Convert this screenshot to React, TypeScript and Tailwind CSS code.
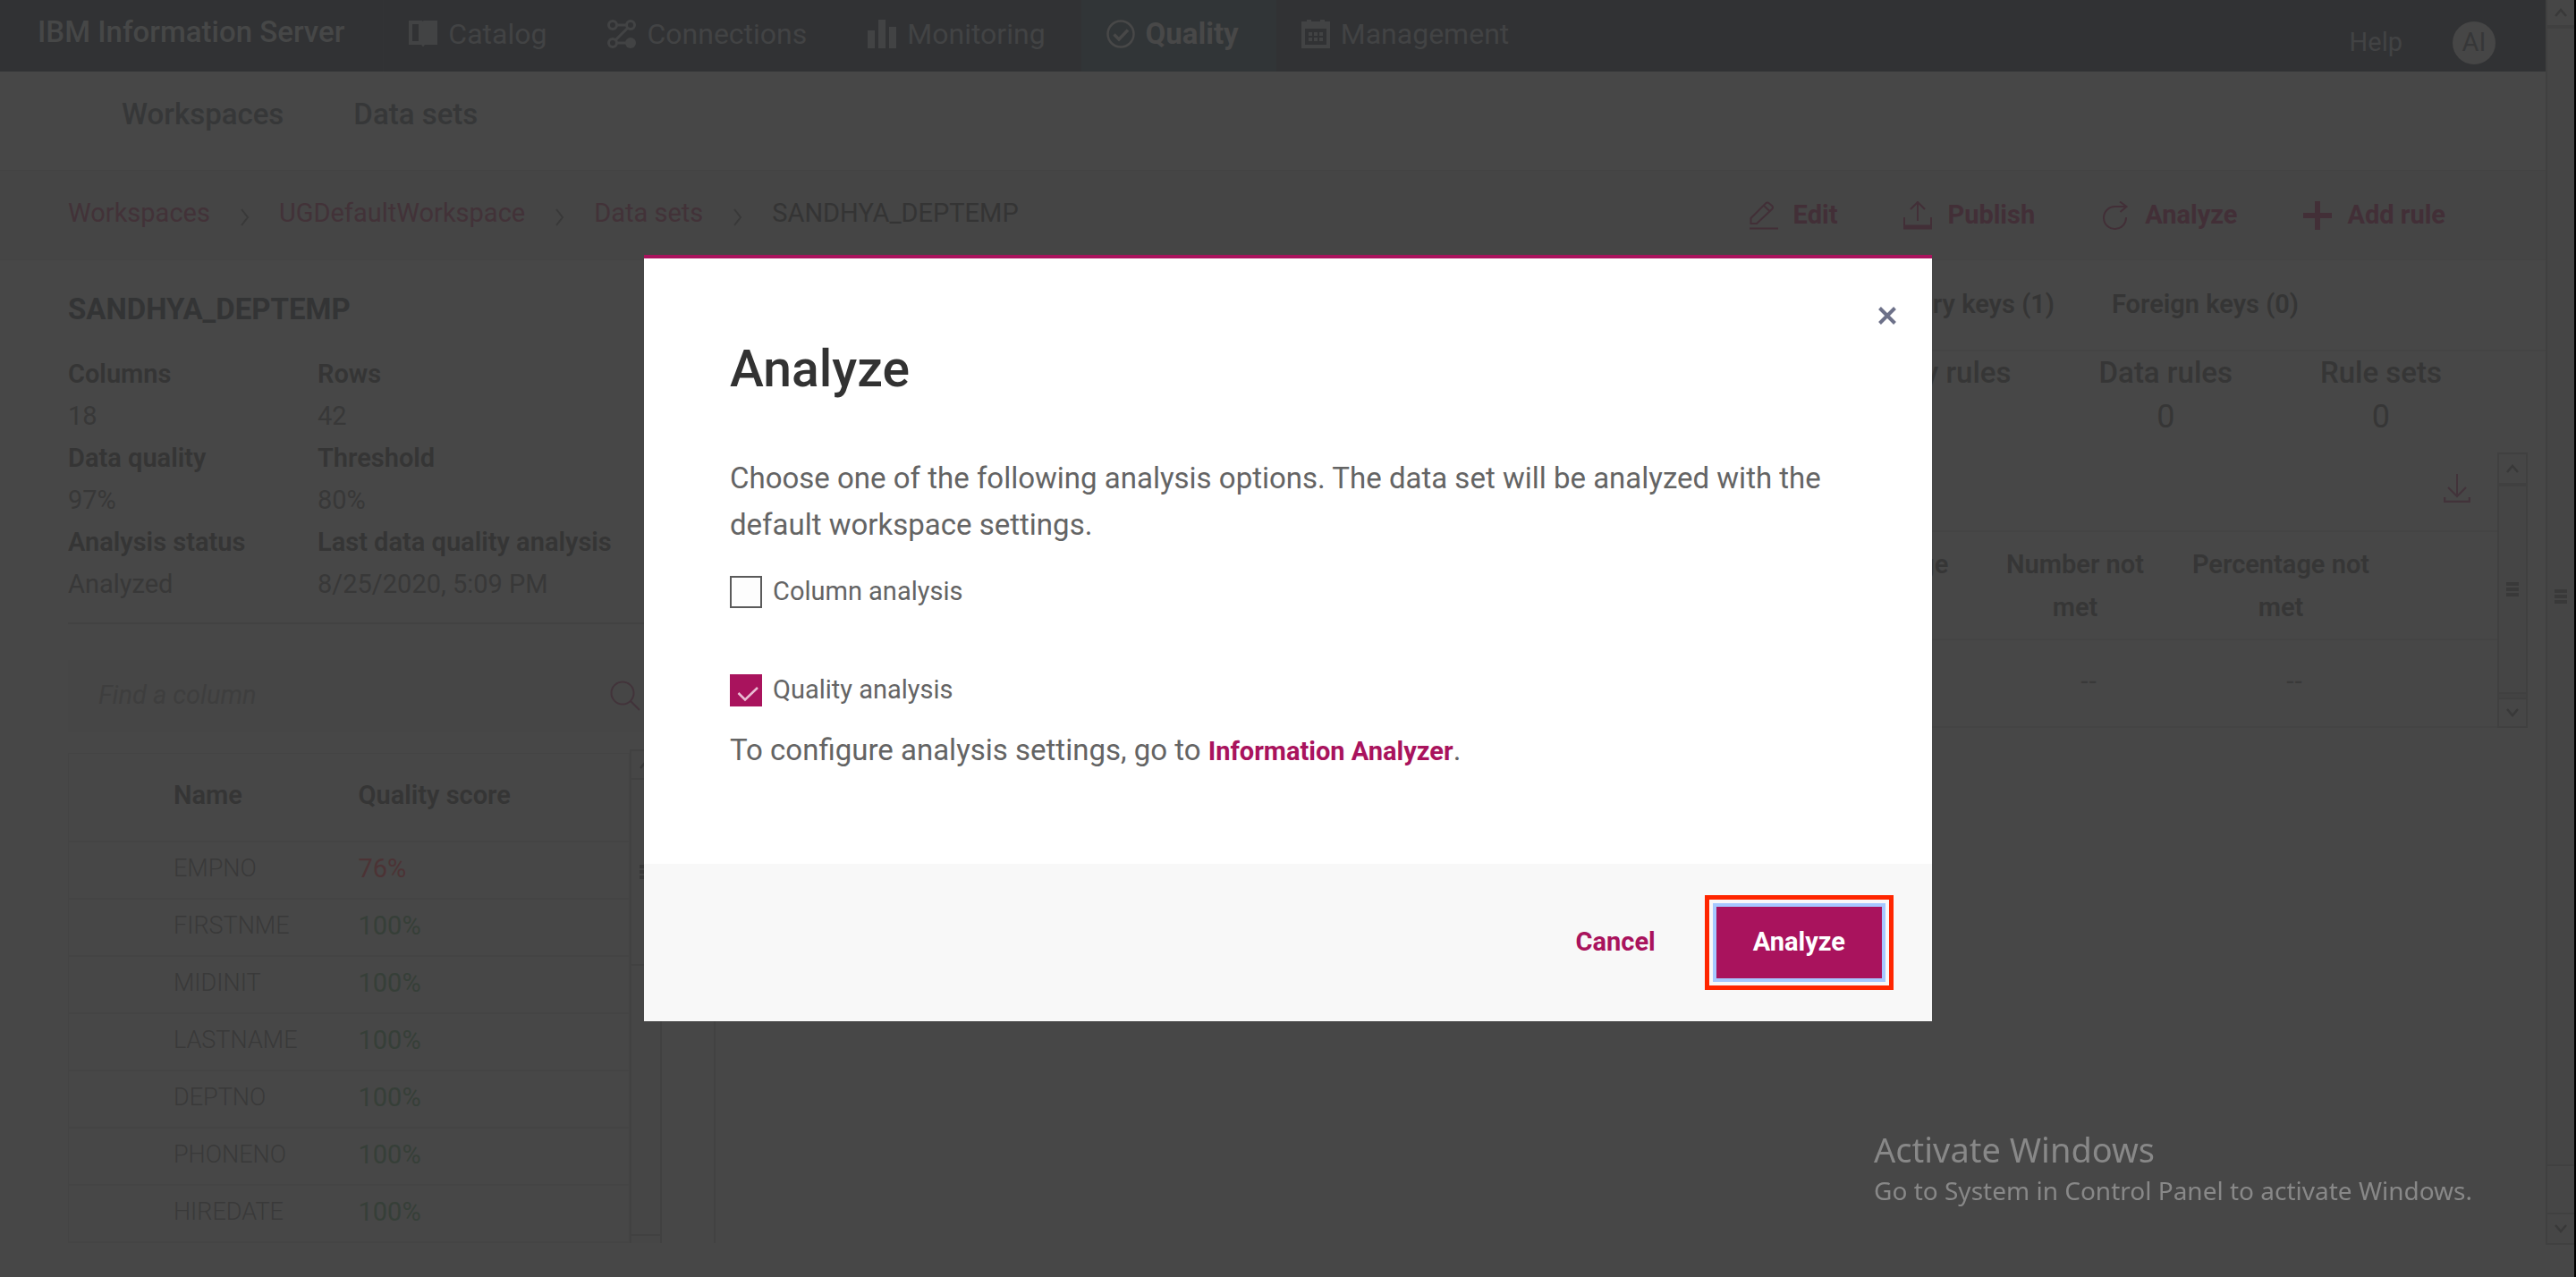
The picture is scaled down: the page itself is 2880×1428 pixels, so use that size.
import type { ReactNode } from "react";

const navItems: { label: string; icon: ReactNode; active?: boolean }[] = [
  {
    label: "Catalog",
    icon: (
      <>
        <path d="M2 3h11v23H2z" fill="none" stroke="currentColor" strokeWidth="4" />
        <path d="M14 2.500l3-1.500h15v27h-14l-2 2.500-2-2.500z" />
      </>
    ),
  },
  {
    label: "Connections",
    icon: (
      <>
        <path d="M6 6h20L6 26h18" fill="none" stroke="currentColor" strokeWidth="3" />
        <g fill="#313234" stroke="currentColor" strokeWidth="3">
          <circle cx="6" cy="6" r="4.500" />
          <circle cx="26" cy="6" r="4.500" />
          <circle cx="6" cy="26" r="4.500" />
        </g>
        <circle cx="26" cy="26" r="6" />
      </>
    ),
  },
  {
    label: "Monitoring",
    icon: <path d="M0 12h8v20H0zM12 0h8v32h-8zM24 8h8v24h-8z" />,
  },
  {
    label: "Quality",
    active: true,
    icon: (
      <g fill="none" stroke="currentColor" strokeWidth="2.500">
        <circle cx="16" cy="16" r="14.500" />
        <path d="M8.500 16.500l5.500 5.500L24 11.500" strokeWidth="3.500" />
      </g>
    ),
  },
  {
    label: "Management",
    icon: (
      <>
        <path
          fillRule="evenodd"
          d="M0 2h6V0h5v2h10V0h5v2h6v30H0zM4 10v18h24V10z"
        />
        <path d="M8 14h4v4H8zM14 14h4v4h-4zM20 14h4v4h-4zM8 20h4v4H8zM14 20h4v4h-4zM20 20h4v4h-4z" />
      </>
    ),
  },
];

const actions: { label: string; icon: ReactNode }[] = [
  {
    label: "Edit",
    icon: (
      <>
        <path d="M1.500 25v-6L18 2.500q2-2 4 0L25 5q2 2 0 4L8 25zM16 5l7 6.500" />
        <path d="M0 30.500h32" />
      </>
    ),
  },
  {
    label: "Publish",
    icon: (
      <>
        <path d="M16 1v21M8 9l8-8 8 8M1 18v12M31 18v12" />
        <path d="M0 29h32" strokeWidth="5" />
      </>
    ),
  },
  {
    label: "Analyze",
    icon: <path d="M28 18a12.500 12.500 0 1 1-12.500-12H28M21 0.500l7.500 5.500-7 6" />,
  },
  {
    label: "Add rule",
    icon: <path d="M16 0v32M0 16h32" strokeWidth="6" />,
  },
];

const crumbs = ["Workspaces", "UGDefaultWorkspace", "Data sets"];

const facts: [string, string][][] = [
  [
    ["Columns", "18"],
    ["Data quality", "97%"],
    ["Analysis status", "Analyzed"],
  ],
  [
    ["Rows", "42"],
    ["Threshold", "80%"],
    ["Last data quality analysis", "8/25/2020, 5:09 PM"],
  ],
];

const columns: [string, string][] = [
  ["EMPNO", "76%"],
  ["FIRSTNME", "100%"],
  ["MIDINIT", "100%"],
  ["LASTNAME", "100%"],
  ["DEPTNO", "100%"],
  ["PHONENO", "100%"],
  ["HIREDATE", "100%"],
];

const stats: [string, string][] = [
  ["Quality rules", "1"],
  ["Data rules", "0"],
  ["Rule sets", "0"],
];

function Arrow({ down = false }: { down?: boolean }) {
  return (
    <svg viewBox="0 0 14 10" className="h-2.5 w-3.5" fill="none" stroke="#393939" strokeWidth="2.500">
      <path d={down ? "M1 1l6 7 6-7" : "M1 9l6-7 6 7"} />
    </svg>
  );
}

function Grip() {
  return (
    <span className="flex flex-col gap-0.5">
      <span className="h-1 w-3.5 bg-[#393939]" />
      <span className="h-1 w-3.5 bg-[#393939]" />
      <span className="h-1 w-3.5 bg-[#393939]" />
    </span>
  );
}

function Header() {
  return (
    <header className="flex h-20 items-stretch bg-[#313234]">
      <span className="mr-[43px] flex items-center pb-2 pl-[42px] text-[33px] font-medium text-[#464747]">
        IBM Information Server
      </span>
      <nav aria-label="Main" className="flex border-l border-[#333436]">
        {navItems.map((item) => (
          <a
            key={item.label}
            href="#"
            className={
              item.active
                ? "flex items-center gap-3 bg-[#313537] pr-[42px] pb-1 pl-7 text-[33px] font-bold text-[#484848]"
                : "flex items-center gap-3 pr-10 pb-1 pl-7 text-[32px] text-[#424344]"
            }
          >
            <svg viewBox="0 0 32 32" className="h-8 w-8" fill="currentColor" aria-hidden="true">
              {item.icon}
            </svg>
            {item.label}
          </a>
        ))}
      </nav>
      <div className="ml-auto flex items-center gap-14 pt-4 pr-14 text-[29px]">
        <a href="#" className="text-[#424344]">
          Help
        </a>
        <button className="flex h-12 w-12 items-center justify-center rounded-full bg-[#464646] text-[#363738]">
          AI
        </button>
      </div>
    </header>
  );
}

function BreadcrumbBar() {
  return (
    <div className="flex h-[100px] items-center justify-between border-b border-[#444] bg-[#454545] pr-28 pl-[76px]">
      <nav aria-label="Breadcrumb">
        <ol className="flex items-center pb-1 text-[29px] text-[#343434]">
          {crumbs.map((crumb) => (
            <li key={crumb} className="flex items-center">
              <a href="#" className="text-[#423238]">
                {crumb}
              </a>
              <svg
                viewBox="0 0 11 20"
                className="mx-[33px] mt-2 h-5 w-[11px]"
                fill="none"
                stroke="#393939"
                strokeWidth="2"
                aria-hidden="true"
              >
                <path d="M2 1l7 9-7 9" />
              </svg>
            </li>
          ))}
          <li>SANDHYA_DEPTEMP</li>
        </ol>
      </nav>
      <div className="flex items-center gap-[74px] text-[29px] font-bold text-[#422f37]">
        {actions.map((action) => (
          <button key={action.label} className="flex items-center gap-[17px]">
            <svg
              viewBox="0 0 32 32"
              className="h-8 w-8"
              fill="none"
              stroke="currentColor"
              strokeWidth="2"
              aria-hidden="true"
            >
              {action.icon}
            </svg>
            {action.label}
          </button>
        ))}
      </div>
    </div>
  );
}

function ColumnsPanel() {
  return (
    <aside className="flex w-[800px] shrink-0 flex-col border-r-2 border-[#424242] pr-[58px] pl-[76px]">
      <h1 className="pt-[31px] text-[33px] leading-[48px] font-bold text-[#333435]">SANDHYA_DEPTEMP</h1>
      <div className="mt-6 flex border-b-2 border-[#424242] pb-5 text-[29px] text-[#353535]">
        {facts.map((group, i) => (
          <dl key={i} className={i === 0 ? "w-[279px]" : ""}>
            {group.map(([term, value]) => (
              <div key={term}>
                <dt className="leading-[48px] font-semibold">{term}</dt>
                <dd className="leading-[46px] text-[#383838]">{value}</dd>
              </div>
            ))}
          </dl>
        ))}
      </div>
      <div className="mt-10 flex h-20 items-center bg-[#464646] pr-6 pl-[34px]">
        <input
          type="text"
          aria-label="Find a column"
          placeholder="Find a column"
          className="w-full bg-transparent text-[29px] italic placeholder:text-[#3e3e3e]"
        />
        <svg
          viewBox="0 0 34 34"
          className="h-[34px] w-[34px] shrink-0"
          fill="none"
          stroke="#42333a"
          strokeWidth="2"
          aria-hidden="true"
        >
          <circle cx="14" cy="14" r="12.500" />
          <path d="M23 23l10 10" />
        </svg>
      </div>
      <div className="mt-5 flex">
        <table className="mt-1 flex-1 table-fixed border border-[#444] text-left text-[29px]">
          <thead>
            <tr className="h-[98px] border-b-2 border-[#444] text-[#353535]">
              <th className="w-[324px] pb-1 pl-[117px] font-semibold">Name</th>
              <th className="pb-1 font-semibold">Quality score</th>
            </tr>
          </thead>
          <tbody>
            {columns.map(([name, score]) => (
              <tr key={name} className="h-16 border-b-2 border-[#444]">
                <td className="pb-0.5 pl-[117px] text-[27px] font-light text-[#393939]">{name}</td>
                <td className={score === "100%" ? "pb-0.5 text-[#363f38]" : "pb-0.5 text-[#4c3335]"}>{score}</td>
              </tr>
            ))}
          </tbody>
        </table>
        <div className="flex w-9 flex-col border-2 border-b-0 border-[#414141] bg-[#464646]">
          <div className="flex h-8 items-center justify-center border-b-2 border-[#414141]">
            <Arrow />
          </div>
          <div className="flex h-52 items-center justify-center border-b-2 border-[#414141]">
            <Grip />
          </div>
          <div className="mt-auto h-2.5 border-t-2 border-[#414141]" />
        </div>
      </div>
    </aside>
  );
}

function RulesPanel() {
  return (
    <section className="flex flex-1 flex-col">
      <div className="flex h-[102px] items-center justify-end gap-16 border-b-2 border-[#444] pr-[276px] text-[29px] font-semibold text-[#353535]">
        <a href="#">Primary keys (1)</a>
        <a href="#">Foreign keys (0)</a>
      </div>
      <dl className="flex justify-end gap-[98px] pr-[116px] text-center text-[#363636]">
        {stats.map(([label, value]) => (
          <div key={label}>
            <dt className="text-[33px] leading-[48px] font-medium">{label}</dt>
            <dd className="text-[36px] leading-[50px]">{value}</dd>
          </div>
        ))}
      </dl>
      <div className="mt-[15px] mr-5 flex items-stretch">
        <div className="flex-1">
          <div className="flex h-[89px] items-center justify-end border-b-2 border-[#444] pr-[30px] pb-2">
            <button aria-label="Download">
              <svg
                viewBox="0 0 30 32"
                className="h-8 w-[30px]"
                fill="none"
                stroke="#42333a"
                strokeWidth="2"
                aria-hidden="true"
              >
                <path d="M15 0v24M5 15l10 10 10-10" />
                <path d="M1 26v5h28v-5" strokeWidth="2.500" />
              </svg>
            </button>
          </div>
          <table className="w-full table-fixed text-center text-[29px]">
            <thead>
              <tr className="h-[120px] border-b-2 border-[#444] leading-[48px] text-[#363636]">
                <th />
                <th className="w-[202px] font-semibold">
                  Percentage
                  <br />
                  met
                </th>
                <th className="w-[230px] font-semibold">
                  Number not
                  <br />
                  met
                </th>
                <th className="w-[230px] font-semibold">
                  Percentage not
                  <br />
                  met
                </th>
                <th className="w-[127px]" />
              </tr>
            </thead>
            <tbody>
              <tr className="h-[98px] border-b-2 border-[#444] font-['Noto_Sans',sans-serif] text-[#393939]">
                <td />
                <td />
                <td className="pb-2 pl-[30px]">--</td>
                <td className="pb-2 pl-[30px]">--</td>
                <td />
              </tr>
            </tbody>
          </table>
        </div>
        <div className="flex w-[34px] flex-col border-2 border-[#404040] bg-[#434343]">
          <div className="flex h-9 items-center justify-center border-b-4 border-[#404040] bg-[#464646]">
            <Arrow />
          </div>
          <div className="flex flex-1 items-center justify-center border-b-2 border-[#404040] bg-[#454545]">
            <Grip />
          </div>
          <div className="mt-1 flex h-8 items-center justify-center border-t-2 border-[#404040] bg-[#464646]">
            <Arrow down />
          </div>
        </div>
      </div>
    </section>
  );
}

function PageScrollbar() {
  return (
    <div className="mb-9 flex w-8 shrink-0 flex-col border-l-2 border-[#404040] bg-[#464646]">
      <div className="flex h-8 items-center justify-center border-b-4 border-[#404040] bg-[#464646]">
        <Arrow />
      </div>
      <div className="flex flex-1 items-center justify-center border-b-2 border-[#404040] bg-[#454545]">
        <Grip />
      </div>
      <div className="mt-[52px] flex h-9 items-center justify-center border-y-2 border-[#404040] bg-[#464646]">
        <Arrow down />
      </div>
    </div>
  );
}

function Option({ label, checked = false }: { label: string; checked?: boolean }) {
  return (
    <label className="flex w-fit items-start gap-3 text-[29px] leading-[34px] text-[#646464]">
      <span className="relative h-9 w-9">
        <input
          type="checkbox"
          defaultChecked={checked}
          className="peer block h-9 w-9 appearance-none border-2 border-[#5a5a5a] bg-[#fdfdfd] checked:border-[#a9135d] checked:bg-[#a9135d]"
        />
        <svg
          viewBox="0 0 36 36"
          className="pointer-events-none absolute inset-0 hidden h-9 w-9 peer-checked:block"
          fill="none"
          stroke="#e9bdd3"
          strokeWidth="2.500"
          aria-hidden="true"
        >
          <path d="M9.500 21l7.500 7.500L31 15" />
        </svg>
      </span>
      {label}
    </label>
  );
}

function AnalyzeDialog() {
  return (
    <div className="fixed inset-0 flex items-center justify-center pb-0.5">
      <div
        role="dialog"
        aria-modal="true"
        aria-labelledby="dialog-title"
        className="relative w-1/2 border-t-4 border-[#a9135d] bg-white"
      >
        <button
          aria-label="Close"
          className="absolute top-10 right-[26px] flex h-12 w-12 items-center justify-center"
        >
          <svg viewBox="0 0 20 20" className="h-5 w-5" fill="none" stroke="#6d7189" strokeWidth="4" aria-hidden="true">
            <path d="M1.500 1.500l17 17M18.500 1.500l-17 17" />
          </svg>
        </button>
        <div className="px-24 pt-[92px] pb-[100px] text-[33px] leading-[52px] text-[#646464]">
          <h2 id="dialog-title" className="text-[57px] leading-[64px] font-medium text-[#323232]">
            Analyze
          </h2>
          <p className="mt-16">
            Choose one of the following analysis options. The data set will be analyzed with the default workspace
            settings.
          </p>
          <div className="mt-[31px] flex flex-col gap-[74px]">
            <Option label="Column analysis" />
            <Option label="Quality analysis" checked />
          </div>
          <p className="mt-[23px]">
            To configure analysis settings, go to{" "}
            <a href="#" className="text-[29px] font-bold text-[#a9135d]">
              Information Analyzer
            </a>
            .
          </p>
        </div>
        <div className="flex h-44 items-center justify-end gap-[68px] bg-[#f8f8f8] pr-14 text-[29px] font-bold">
          <button className="text-[#a9135d]">Cancel</button>
          <span className="relative">
            <button className="h-20 bg-[#a9135d] px-[41px] text-white ring-4 ring-[#a6c8ff]">Analyze</button>
            <span className="pointer-events-none absolute -inset-[13px] border-[5px] border-[#ff2600]" />
          </span>
        </div>
      </div>
    </div>
  );
}

export default function App() {
  return (
    <div className="flex h-screen overflow-hidden border-r-2 border-black bg-[#474747] font-['Roboto','Liberation_Sans',sans-serif]">
      <main className="flex flex-1 flex-col">
        <Header />
        <nav
          aria-label="Quality"
          className="flex h-[111px] items-center gap-[78px] border-b border-[#434343] pb-3.5 pl-[136px] text-[33px] font-medium text-[#363738]"
        >
          <a href="#">Workspaces</a>
          <a href="#">Data sets</a>
        </nav>
        <BreadcrumbBar />
        <div className="flex">
          <ColumnsPanel />
          <RulesPanel />
        </div>
      </main>
      <PageScrollbar />
      <AnalyzeDialog />
      <div className="pointer-events-none fixed right-[116px] bottom-[74px] font-['Noto_Sans','Open_Sans',sans-serif] text-[#888]">
        <p className="text-[38px] leading-[46px]">Activate Windows</p>
        <p className="text-[28px] leading-[46px]">Go to System in Control Panel to activate Windows.</p>
      </div>
    </div>
  );
}
